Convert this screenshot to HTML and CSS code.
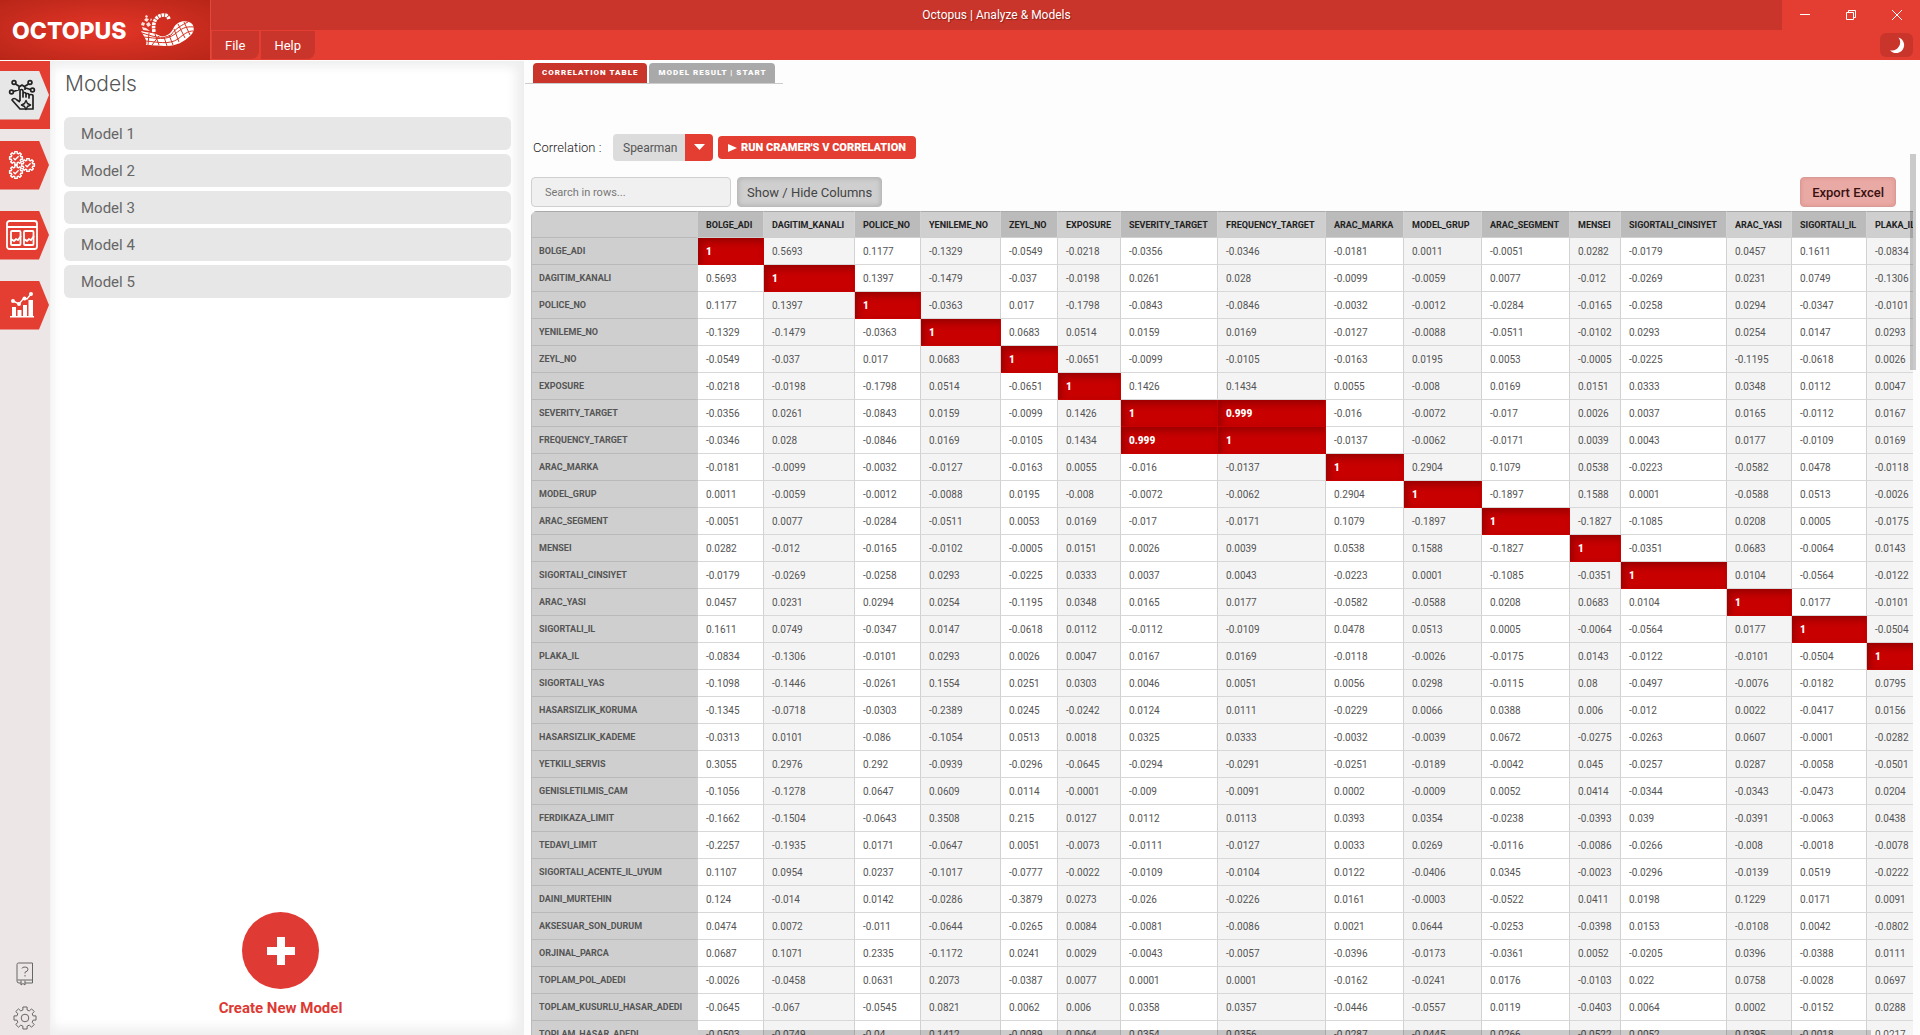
FILE: index.html
```html
<!DOCTYPE html>
<html lang="en">
<head>
<meta charset="utf-8">
<meta name="viewport" content="width=device-width, initial-scale=1">
<title>Octopus | Analyze &amp; Models</title>
<link rel="stylesheet" href="styles.css">
</head>
<body>
<div class="app">
  <header class="topbar">
    <div class="brand">
      <span class="brand-name">OCTOPUS</span>
      <svg class="brand-logo" viewBox="0 0 56 34" aria-hidden="true">
        <path d="M1 18 C6 20 13 19 18 22 C24 25 30 22 33 16 C36 9 43 7 49 9 C55 11 55 18 51 22 C44 29 36 33 27 33 C19 33 10 32 6 32 C8 28 3 22 1 18Z" fill="#fff"/>
        <path d="M14 19 C12 8 17 2 24 2 C26 2 28 3 29 6" fill="none" stroke="#fff" stroke-width="3.600" stroke-dasharray="2.600 .8"/>
        <path d="M4 24 C16 25 26 28 35 21 C41 16 45 13 54 14 M6 28 C17 29 29 32 38 26 C44 21 48 18 53 18 M2 20 C12 23 22 27 31 22 C36 15 42 12 48 9 M9 20l-1 12 M15 21l4 11 M19 23l-7 9 M24 24l3 9 M29 22l4 10 M34 16l5 13 M38 11l7 14 M44 9l6 13" fill="none" stroke="#d5301f" stroke-width="1"/>
        <path d="M2 9l3 1-1 3-3-1z M6 5l3 1-2 3-3-2z M6 2l2 1-1 2-2-1z M9 9l2 3-3 2-2-3z M2 14l4 1 4 3-7-1z M11 5l1 2-2 1z" fill="#ffe3de"/>
      </svg>
    </div>
    <div class="topbar-rows">
      <div class="titlebar">
        <div class="titlebar-drag">Octopus | Analyze &amp; Models</div>
        <div class="window-controls">
          <button type="button" aria-label="Minimize"><svg viewBox="0 0 12 12"><path d="M1 5.500h10"/></svg></button>
          <button type="button" aria-label="Restore"><svg viewBox="0 0 12 12"><path d="M1.500 3.500h7v7h-7zM3.500 3.500v-2h7v7h-2"/></svg></button>
          <button type="button" aria-label="Close"><svg viewBox="0 0 12 12"><path d="M1 1l10 10M11 1L1 11"/></svg></button>
        </div>
      </div>
      <div class="menubar">
        <nav class="menu">
          <button type="button">File</button>
          <button type="button">Help</button>
        </nav>
        <button type="button" class="theme-toggle" aria-label="Dark mode">
          <svg viewBox="0 0 16 16"><path d="M9.500 0.500A8.200 8.200 0 0 1 1 13.300A8 8 0 1 0 9.500 0.500Z"/></svg>
        </button>
      </div>
    </div>
  </header>

  <div class="workspace">
    <aside class="rail">
      <nav class="rail-main">
        <a href="#models" class="rail-item active" aria-label="Models">
          <span class="rail-shape"><svg viewBox="0 0 28 32" fill="none" stroke="currentColor" stroke-width="1.700" stroke-linejoin="round">
            <circle cx="6" cy="3.500" r="1.900"/><circle cx="22" cy="3.500" r="1.900"/><circle cx="3.500" cy="13" r="1.900"/><circle cx="24.500" cy="11" r="1.900"/>
            <path d="M7.500 5l4 2.500M20.500 5l-4 2.500M5.500 12.500l6-2M22.500 10.500l-5-1.500M11 11V8l3-2 3 2v3"/>
            <path d="M12 22V12c0-2 3-2 3 0v6v-3c0-2 3-2 3 0v3v-2c0-2 3-2 3 0v3v-2c0-2 4-2 4 0v13H12l-8-9c1-2 3-2 5 0l3 2"/>
            <path d="M18 21.500l1.500 3 3 1.500-3 1.500-1.500 3-1.500-3-3-1.500 3-1.500z" stroke-width="1.500"/>
          </svg></span>
        </a>
        <a href="#process" class="rail-item" aria-label="Processes">
          <span class="rail-shape"><svg viewBox="0 0 28 30" fill="none" stroke="currentColor">
            <symbol id="gear" viewBox="0 0 24 24" overflow="visible">
              <path stroke-width="2.400" stroke-linejoin="round" d="M9.900 1h4.200v3l2.200.9 2.300-2 2.600 2.600-2 2.300.9 2.100H23v4.200h-2.900l-.9 2.200 2 2.200-2.600 2.700-2.300-2-2.200.9V23H9.900v-2.900l-2.200-.9-2.200 2-2.700-2.700 2-2.200-.9-2.200H1V9.900h2.900l.9-2.100-2-2.300 2.700-2.600 2.200 2 2.200-.9z"/>
              <path stroke-width="2.200" d="M7.500 12l3 3 6-6"/>
            </symbol>
            <use href="#gear" x="1" y="1" width="14" height="14"/>
            <use href="#gear" x="1" y="15" width="14" height="14"/>
            <use href="#gear" x="13" y="8" width="14" height="14"/>
          </svg></span>
        </a>
        <a href="#results" class="rail-item" aria-label="Results">
          <span class="rail-shape"><svg class="wide" viewBox="0 0 32 30" fill="none" stroke="currentColor" stroke-width="1.800">
            <rect x="1" y="1" width="30" height="28" rx="2.500"/><path d="M1 7h30"/>
            <rect x="5" y="11" width="9.500" height="14" rx="1"/><rect x="18" y="11" width="9.500" height="14" rx="1"/>
            <path d="M5 19l3 2 2-2 2 1 3-4M18 19l3 2 2-2 2 1 3-4"/>
          </svg></span>
        </a>
        <a href="#charts" class="rail-item" aria-label="Charts">
          <span class="rail-shape"><svg viewBox="0 0 28 28" fill="currentColor">
            <path d="M2 25h24v1.500H2zM4 16h4v9H4zM9.500 19h4v6h-4zM15 14h4v11h-4zM20.500 9h4.500v16h-4.500z"/>
            <g stroke="currentColor" stroke-width="1.400" fill="none"><path d="M5 10l6 3 5-6 3 1 4-5"/></g>
            <circle cx="5" cy="10" r="2"/><circle cx="11" cy="13" r="2"/><circle cx="16.500" cy="7.500" r="2"/><circle cx="23" cy="3" r="2"/>
          </svg></span>
        </a>
      </nav>
      <nav class="rail-foot">
        <a href="#help" aria-label="Help"><svg width="24" height="24" viewBox="0 0 24 24">
          <path d="M8.500 21H6a2 2 0 0 1-2-2V2.500Q4 1 5.500 1H19.500V21H11.500M4.500 18H19.500M8 18.500V23l2-1.500 2 1.500v-4.500M9 6.500Q9 5 12 5t3 2.200-3 3v1.300M12 13v1.500"/></svg></a>
        <a href="#settings" aria-label="Settings"><svg width="24" height="24" viewBox="0 0 24 24">
          <circle cx="12" cy="12" r="3.800"/>
          <path d="M9.900 1h4.200v3l2.200.9 2.300-2 2.600 2.600-2 2.300.9 2.100H23v4.200h-2.900l-.9 2.200 2 2.200-2.600 2.700-2.300-2-2.200.9V23H9.900v-2.900l-2.200-.9-2.200 2-2.700-2.700 2-2.200-.9-2.200H1V9.900h2.900l.9-2.100-2-2.300 2.700-2.600 2.200 2 2.200-.9z"/></svg></a>
      </nav>
    </aside>

    <section class="models">
      <h1>Models</h1>
      <ul class="model-list">
        <li><button type="button">Model 1</button></li>
        <li><button type="button">Model 2</button></li>
        <li><button type="button">Model 3</button></li>
        <li><button type="button">Model 4</button></li>
        <li><button type="button">Model 5</button></li>
      </ul>
      <button type="button" class="create">
        <span class="create-disc"><svg viewBox="0 0 28 28"><path d="M10 0h8v10h10v8H18v10h-8V18H0v-8h10z"/></svg></span>
        Create New Model
      </button>
    </section>

    <main class="content">
      <div class="tabs">
        <button type="button" class="tab current">CORRELATION TABLE</button>
        <button type="button" class="tab">MODEL RESULT | START</button>
      </div>
      <div class="method">
        <label for="method">Correlation :</label>
        <span class="picker">
          <select id="method"><option>Spearman</option><option>Pearson</option><option>Kendall</option></select>
        </span>
        <button type="button" class="run">
          <svg width="9" height="8" viewBox="0 0 9 8"><path d="M0 0l9 4-9 4z"/></svg>RUN CRAMER'S V CORRELATION
        </button>
      </div>
      <div class="tools">
        <input type="text" class="search" placeholder="Search in rows..." aria-label="Search in rows">
        <button type="button" class="tool">Show / Hide Columns</button>
        <button type="button" class="tool export">Export Excel</button>
      </div>
      <div class="table-wrap">
        <table class="matrix" id="matrix"></table>
        <div class="scroll-x"></div>
      </div>
      <div class="scroll-y"></div>
    </main>
  </div>
</div>
<script src="matrix.js"></script>
</body>
</html>
```
FILE: matrix.js
```js
const columns = [
  ['BOLGE_ADI', 66], ['DAGITIM_KANALI', 91], ['POLICE_NO', 66], ['YENILEME_NO', 80],
  ['ZEYL_NO', 57], ['EXPOSURE', 63], ['SEVERITY_TARGET', 97], ['FREQUENCY_TARGET', 108],
  ['ARAC_MARKA', 78], ['MODEL_GRUP', 78], ['ARAC_SEGMENT', 88], ['MENSEI', 51],
  ['SIGORTALI_CINSIYET', 106], ['ARAC_YASI', 65], ['SIGORTALI_IL', 75], ['PLAKA_IL', 64]
];

const rows = `
BOLGE_ADI 1 0.5693 0.1177 -0.1329 -0.0549 -0.0218 -0.0356 -0.0346 -0.0181 0.0011 -0.0051 0.0282 -0.0179 0.0457 0.1611 -0.0834
DAGITIM_KANALI 0.5693 1 0.1397 -0.1479 -0.037 -0.0198 0.0261 0.028 -0.0099 -0.0059 0.0077 -0.012 -0.0269 0.0231 0.0749 -0.1306
POLICE_NO 0.1177 0.1397 1 -0.0363 0.017 -0.1798 -0.0843 -0.0846 -0.0032 -0.0012 -0.0284 -0.0165 -0.0258 0.0294 -0.0347 -0.0101
YENILEME_NO -0.1329 -0.1479 -0.0363 1 0.0683 0.0514 0.0159 0.0169 -0.0127 -0.0088 -0.0511 -0.0102 0.0293 0.0254 0.0147 0.0293
ZEYL_NO -0.0549 -0.037 0.017 0.0683 1 -0.0651 -0.0099 -0.0105 -0.0163 0.0195 0.0053 -0.0005 -0.0225 -0.1195 -0.0618 0.0026
EXPOSURE -0.0218 -0.0198 -0.1798 0.0514 -0.0651 1 0.1426 0.1434 0.0055 -0.008 0.0169 0.0151 0.0333 0.0348 0.0112 0.0047
SEVERITY_TARGET -0.0356 0.0261 -0.0843 0.0159 -0.0099 0.1426 1 0.999 -0.016 -0.0072 -0.017 0.0026 0.0037 0.0165 -0.0112 0.0167
FREQUENCY_TARGET -0.0346 0.028 -0.0846 0.0169 -0.0105 0.1434 0.999 1 -0.0137 -0.0062 -0.0171 0.0039 0.0043 0.0177 -0.0109 0.0169
ARAC_MARKA -0.0181 -0.0099 -0.0032 -0.0127 -0.0163 0.0055 -0.016 -0.0137 1 0.2904 0.1079 0.0538 -0.0223 -0.0582 0.0478 -0.0118
MODEL_GRUP 0.0011 -0.0059 -0.0012 -0.0088 0.0195 -0.008 -0.0072 -0.0062 0.2904 1 -0.1897 0.1588 0.0001 -0.0588 0.0513 -0.0026
ARAC_SEGMENT -0.0051 0.0077 -0.0284 -0.0511 0.0053 0.0169 -0.017 -0.0171 0.1079 -0.1897 1 -0.1827 -0.1085 0.0208 0.0005 -0.0175
MENSEI 0.0282 -0.012 -0.0165 -0.0102 -0.0005 0.0151 0.0026 0.0039 0.0538 0.1588 -0.1827 1 -0.0351 0.0683 -0.0064 0.0143
SIGORTALI_CINSIYET -0.0179 -0.0269 -0.0258 0.0293 -0.0225 0.0333 0.0037 0.0043 -0.0223 0.0001 -0.1085 -0.0351 1 0.0104 -0.0564 -0.0122
ARAC_YASI 0.0457 0.0231 0.0294 0.0254 -0.1195 0.0348 0.0165 0.0177 -0.0582 -0.0588 0.0208 0.0683 0.0104 1 0.0177 -0.0101
SIGORTALI_IL 0.1611 0.0749 -0.0347 0.0147 -0.0618 0.0112 -0.0112 -0.0109 0.0478 0.0513 0.0005 -0.0064 -0.0564 0.0177 1 -0.0504
PLAKA_IL -0.0834 -0.1306 -0.0101 0.0293 0.0026 0.0047 0.0167 0.0169 -0.0118 -0.0026 -0.0175 0.0143 -0.0122 -0.0101 -0.0504 1
SIGORTALI_YAS -0.1098 -0.1446 -0.0261 0.1554 0.0251 0.0303 0.0046 0.0051 0.0056 0.0298 -0.0115 0.08 -0.0497 -0.0076 -0.0182 0.0795
HASARSIZLIK_KORUMA -0.1345 -0.0718 -0.0303 -0.2389 0.0245 -0.0242 0.0124 0.0111 -0.0229 0.0066 0.0388 0.006 -0.012 0.0022 -0.0417 0.0156
HASARSIZLIK_KADEME -0.0313 0.0101 -0.086 -0.1054 0.0513 0.0018 0.0325 0.0333 -0.0032 -0.0039 0.0672 -0.0275 -0.0263 0.0607 -0.0001 -0.0282
YETKILI_SERVIS 0.3055 0.2976 0.292 -0.0939 -0.0296 -0.0645 -0.0294 -0.0291 -0.0251 -0.0189 -0.0042 0.045 -0.0257 0.0287 -0.0058 -0.0501
GENISLETILMIS_CAM -0.1056 -0.1278 0.0647 0.0609 0.0114 -0.0001 -0.009 -0.0091 0.0002 -0.0009 0.0052 0.0414 -0.0344 -0.0343 -0.0473 0.0204
FERDIKAZA_LIMIT -0.1662 -0.1504 -0.0643 0.3508 0.215 0.0127 0.0112 0.0113 0.0393 0.0354 -0.0238 -0.0393 0.039 -0.0391 -0.0063 0.0438
TEDAVI_LIMIT -0.2257 -0.1935 0.0171 -0.0647 0.0051 -0.0073 -0.0111 -0.0127 0.0033 0.0269 -0.0116 -0.0086 -0.0266 -0.008 -0.0018 -0.0078
SIGORTALI_ACENTE_IL_UYUM 0.1107 0.0954 0.0237 -0.1017 -0.0777 -0.0022 -0.0109 -0.0104 0.0122 -0.0406 0.0345 -0.0023 -0.0296 -0.0139 0.0519 -0.0222
DAINI_MURTEHIN 0.124 -0.014 0.0142 -0.0286 -0.3879 0.0273 -0.026 -0.0226 0.0161 -0.0003 -0.0522 0.0411 0.0198 0.1229 0.0171 0.0091
AKSESUAR_SON_DURUM 0.0474 0.0072 -0.011 -0.0644 -0.0265 0.0084 -0.0081 -0.0086 0.0021 0.0644 -0.0253 -0.0398 0.0153 -0.0108 0.0042 -0.0802
ORJINAL_PARCA 0.0687 0.1071 0.2335 -0.1172 0.0241 0.0029 -0.0043 -0.0057 -0.0396 -0.0173 -0.0361 0.0052 -0.0205 0.0396 -0.0388 0.0111
TOPLAM_POL_ADEDI -0.0026 -0.0458 0.0631 0.2073 -0.0387 0.0077 0.0001 0.0001 -0.0162 -0.0241 0.0176 -0.0103 0.022 0.0758 -0.0028 0.0697
TOPLAM_KUSURLU_HASAR_ADEDI -0.0645 -0.067 -0.0545 0.0821 0.0062 0.006 0.0358 0.0357 -0.0446 -0.0557 0.0119 -0.0403 0.0064 0.0002 -0.0152 0.0288
TOPLAM_HASAR_ADEDI -0.0503 -0.0749 -0.04 0.1412 -0.0089 0.0064 0.0354 0.0356 -0.0287 -0.0445 0.0266 -0.0522 0.0052 0.0395 -0.0018 0.0217
`.trim().split('\n').map(line => line.split(' '));

const strong = value => Math.abs(Number(value)) > 0.9;

document.getElementById('matrix').innerHTML =
  '<colgroup><col class="names">' +
  columns.map(([, width]) => `<col style="width:${width}px">`).join('') + '</colgroup>' +
  '<thead><tr><th scope="col" aria-label="Variable"></th>' +
  columns.map(([name]) => `<th scope="col">${name}</th>`).join('') + '</tr></thead><tbody>' +
  rows.map(([name, ...values]) =>
    `<tr><th scope="row">${name}</th>` +
    values.map(v => `<td${strong(v) ? ' class="strong"' : ''}>${v}</td>`).join('') + '</tr>'
  ).join('') + '</tbody>';
```
FILE: styles.css
```css
:root {
  --red: #e43d31;
  --red-dark: #ca352b;
}
* { box-sizing: border-box; }
body {
  margin: 0;
  font-family: Roboto, "Liberation Sans", sans-serif;
  color: #333;
  background: #fdfdfd;
}
button, input, select { font: inherit; color: inherit; border: 0; margin: 0; }
button { cursor: pointer; padding: 0; background: none; }
a { color: inherit; }
svg { display: block; }

.app { display: flex; flex-direction: column; height: 100vh; overflow: hidden; }

/* Top bar */
.topbar { display: flex; flex: none; height: 60px; background: var(--red); color: #fff; }
.brand {
  display: flex; align-items: center; gap: 14px; width: 211px; padding: 0 12px;
  border-right: 1px solid #e0493e;
  background: radial-gradient(ellipse at center, #e03426 10%, #b82618 100%);
}
.brand-name { font: 800 23px/32px Inter, sans-serif; padding-top: 2px; }
.brand-logo { width: 56px; height: 34px; }
.topbar-rows { display: flex; flex: 1; flex-direction: column; }
.titlebar { display: flex; height: 30px; }
.titlebar-drag {
  flex: 1; background: var(--red-dark); text-align: center;
  font-size: 12px; line-height: 30px; text-shadow: 1px 1px 1px #8a2018;
}
.window-controls { display: flex; }
.window-controls button { display: grid; place-items: center; width: 46px; }
.window-controls svg { width: 12px; height: 12px; fill: none; stroke: #fff; }
.menubar { display: flex; justify-content: space-between; height: 30px; padding: 1px 7px 1px 1px; }
.menu { display: flex; gap: 2px; }
.menu button {
  padding: 1px 14px 0 13px; background: var(--red-dark); border-radius: 0 0 8px 0;
  font-size: 13px; line-height: 27px;
}
.theme-toggle {
  display: grid; place-items: center; width: 33px; height: 24px; margin-top: 2px;
  background: var(--red-dark); border-radius: 6px;
}
.theme-toggle svg { width: 16px; height: 16px; fill: #fff; }

.workspace { display: flex; flex: 1; min-height: 0; padding-top: 1px; }

/* Icon rail */
.rail {
  display: flex; flex-direction: column; justify-content: space-between;
  width: 50px; background: #ede6e6;
}
.rail-main { display: flex; flex-direction: column; gap: 2px; }
.rail-item { display: flex; align-items: center; height: 68px; color: #fff; }
.rail-item.active { color: #222; background: var(--red); }
.rail-shape {
  display: flex; align-items: center; justify-content: center; width: 49px; height: 49px; padding-right: 6px;
  background: var(--red); clip-path: polygon(0 0, 39px 0, 100% 50%, 39px 100%, 0 100%);
}
.rail-item.active .rail-shape { background: #e7e7e7; }
.rail-shape svg { width: 28px; height: 32px; }
.rail-shape svg.wide { width: 32px; height: 30px; }
.rail-foot { display: flex; flex-direction: column; align-items: center; gap: 20px; padding-bottom: 5px; }
.rail-foot svg { fill: none; stroke: #666; }

/* Model list */
.models {
  display: flex; flex-direction: column; width: 473px; padding: 7px 12px 16px 14px;
  background: #fff; box-shadow: inset -6px 0 14px #eee, inset 0 -6px 14px #f0f0f0, inset 0 6px 10px #f4f4f4;
}
.models h1 { margin: 0 0 17px; padding-left: 1px; font: 300 21px/32px Inter, sans-serif; color: #555; }
.model-list { display: flex; flex-direction: column; gap: 4px; margin: 0; padding: 0; list-style: none; }
.model-list button {
  display: block; width: 100%; padding: 1px 17px 0; border-radius: 6px; background: #e7e7e7;
  color: #666; font-size: 15px; line-height: 32px; text-align: left;
}
.create {
  display: flex; flex-direction: column; align-items: center; gap: 8px; align-self: center;
  margin-top: auto; padding-right: 14px;
  color: #dd3933; font-size: 15px; line-height: 22px; font-weight: 700;
}
.create-disc {
  display: grid; place-items: center; width: 77px; height: 77px; border-radius: 50%; background: #e03a34;
}
.create-disc svg { width: 28px; height: 28px; fill: #fff; }

/* Content */
.content {
  position: relative; display: flex; flex: 1; flex-direction: column; min-width: 0;
  padding: 2px 7px 0; border-left: 1px solid #eee;
}
.tabs {
  display: flex; align-self: flex-start; gap: 2px; margin-left: -6px; padding: 0 8px; border-bottom: 1px solid #ccc;
}
.tab {
  padding: 0 9px; border-radius: 4px 4px 0 0; background: #a9a9a9; color: #fff;
  font-size: 8px; line-height: 20px; font-weight: 900; letter-spacing: 1px;
}
.tab.current { background: var(--red-dark); }
.method { display: flex; align-items: center; gap: 5px; margin-top: 50px; padding-left: 2px; }
.method label { width: 75px; font-size: 13px; font-weight: 300; color: #222; white-space: nowrap; }
.picker { position: relative; display: flex; }
.picker::after {
  content: ""; position: absolute; right: 8px; top: 10px; width: 11px; height: 6px;
  background: #fff; clip-path: polygon(0 0, 100% 0, 50% 100%); pointer-events: none;
}
.picker select {
  appearance: none; width: 100px; height: 27px; padding: 0 30px 0 10px; border-radius: 4px;
  background: linear-gradient(to right, #dcdcdc calc(100% - 28px), var(--red) 0); color: #555; font-size: 12px;
}
.run {
  display: flex; align-items: center; gap: 4px; height: 23px; padding: 0 10px; border-radius: 4px;
  background: var(--red); color: #fff; font-size: 11px; font-weight: 900; white-space: nowrap;
}
.run svg { fill: #fff; }
.tools { display: flex; gap: 6px; margin-top: 16px; padding-right: 17px; }
.search {
  width: 200px; height: 30px; padding: 0 13px; border: 1px solid #d0d0d0; border-radius: 4px;
  background: #f0f0f0; font-size: 11px;
}
.search::placeholder { color: #777; }
.tool {
  height: 30px; padding: 0 9px; border: 1px solid #bbb; border-radius: 4px; background: #cfcfcf;
  box-shadow: inset 0 0 5px #aaa; color: #444; font-size: 13px;
}
.tool.export {
  margin-left: auto; padding: 0 11px; background: #e9aaa5; border-color: #d99b97;
  box-shadow: inset 0 0 4px #e0918b; color: #3a1111; font-weight: 500;
}

/* Correlation matrix */
.table-wrap {
  position: relative; flex: 1; min-height: 0; margin-top: 4px; overflow: hidden;
  border-radius: 6px 0 0 0;
}
.matrix { width: 100%; table-layout: fixed; border-collapse: separate; border-spacing: 0; font-size: 10px; }
.matrix .names { width: 167px; }
.matrix th, .matrix td {
  height: 27px; padding: 0 7px 0 8px; text-align: left; white-space: nowrap;
  border-right: 1px solid #d2d2d2; border-bottom: 1px solid #d8d8d8;
}
.matrix td { background: #fff; color: #555; }
.matrix td:nth-child(odd) { background: #f4f4f4; }
.matrix th { font-size: 9px; font-weight: 700; background: #cfcfcf; color: #555; }
.matrix thead th { color: #222; border-top: 1px solid #aaa; border-bottom-color: #cfcfcf; }
.matrix thead th:nth-child(even) { background: #bbb; }
.matrix th:first-child {
  padding-left: 7px; border-left: 1px solid #bbb; border-right-color: #cfcfcf; border-bottom-color: #b9b9b9;
}
.matrix td.strong {
  background: #c80000; color: #fff; font-weight: 900; border-color: #c80000;
  box-shadow: inset 3px 4px 7px #900;
}
.scroll-x { position: absolute; left: 167px; right: 42px; bottom: 0; height: 5px; background: rgba(0, 0, 0, .2); }
.scroll-y { position: absolute; top: 93px; right: 4px; width: 6px; height: 216px; background: rgba(0, 0, 0, .2); }
```
